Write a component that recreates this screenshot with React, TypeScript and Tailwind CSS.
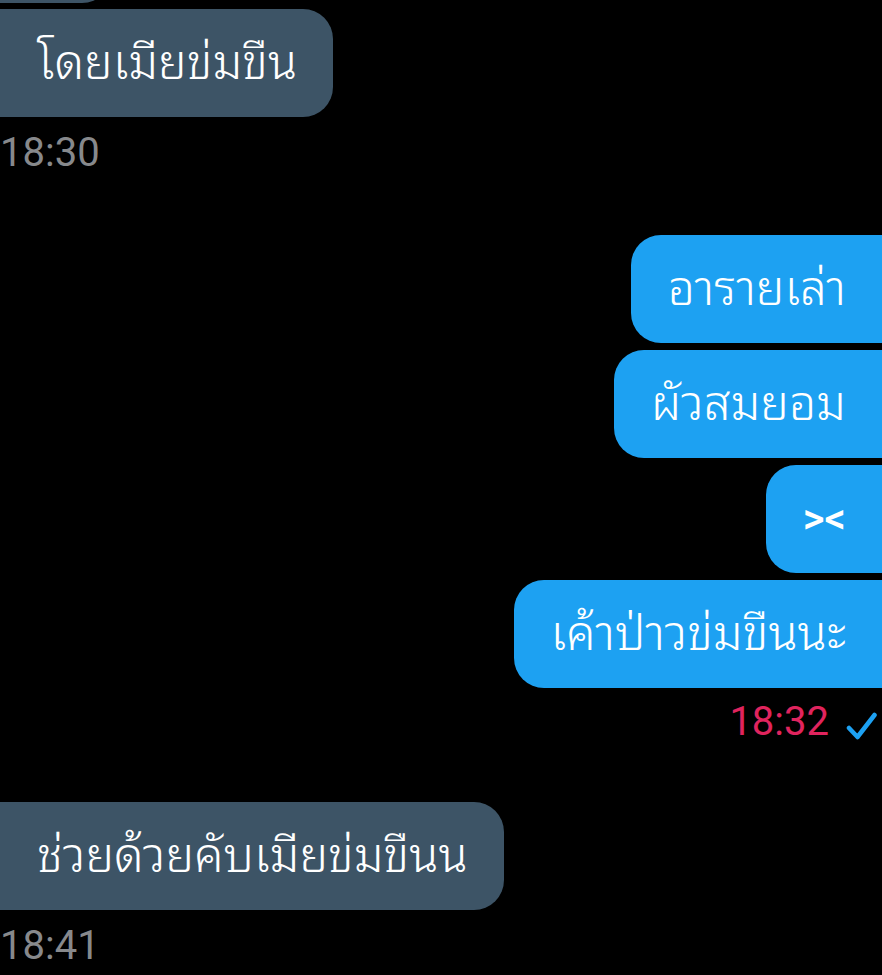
import React from "react";

const thai = "font-['Noto_Sans_Thai_Looped','Noto_Sans_Thai','Noto_Sans',Roboto,sans-serif] font-light";

function Left({ text }: { text: string }) {
  return (
    <div className="flex">
      <div className={`h-[108px] flex items-center pl-[37px] pr-[36px] pb-[10px] bg-[#3d5466] rounded-r-[30px] text-white text-[48px] leading-none ${thai}`}>
        {text}
      </div>
    </div>
  );
}

function Right({ text, latin }: { text: string; latin?: boolean }) {
  return (
    <div className="flex justify-end">
      <div
        className={`h-[108px] flex items-center pl-[37px] pr-[36px] bg-[#1da1f2] rounded-l-[30px] text-white leading-none ${
          latin ? "text-[42px] font-medium font-['Roboto',sans-serif]" : `text-[48px] pb-[10px] ${thai}`
        }`}
      >
        {text}
      </div>
    </div>
  );
}

export default function App() {
  return (
    <div className="w-[882px] h-[975px] bg-black overflow-hidden flex flex-col">
      <div className="flex">
        <div className="-mt-[105px] h-[108px] w-[112px] bg-[#3d5466] rounded-r-[30px]" />
      </div>
      <div className="mt-[6px]">
        <Left text="โดยเมียข่มขืน" />
      </div>
      <div className="mt-[16px] h-[40px] text-[40px] leading-[40px] text-[#87898c] font-['Roboto',sans-serif]">18:30</div>
      <div className="mt-[62px] flex flex-col gap-[7px]">
        <Right text="อารายเล่า" />
        <Right text="ผัวสมยอม" />
        <Right text="><" latin />
        <Right text="เค้าป่าวข่มขืนนะ" />
      </div>
      <div className="mt-[14px] h-[40px] flex justify-end items-center pr-[5px] gap-[17px]">
        <span className="text-[40px] leading-[40px] text-[#e0245e] font-['Roboto',sans-serif]">18:32</span>
        <svg width="31" height="28" viewBox="0 0 31 28" className="mt-[8px]">
          <path d="M3 16 L11.5 25 L28.5 3" fill="none" stroke="#1da1f2" strokeWidth="4.5" strokeLinecap="round" strokeLinejoin="round" />
        </svg>
      </div>
      <div className="mt-[60px]">
        <Left text="ช่วยด้วยคับเมียข่มขืนน" />
      </div>
      <div className="mt-[16px] h-[40px] text-[40px] leading-[40px] text-[#87898c] font-['Roboto',sans-serif]">18:41</div>
    </div>
  );
}
